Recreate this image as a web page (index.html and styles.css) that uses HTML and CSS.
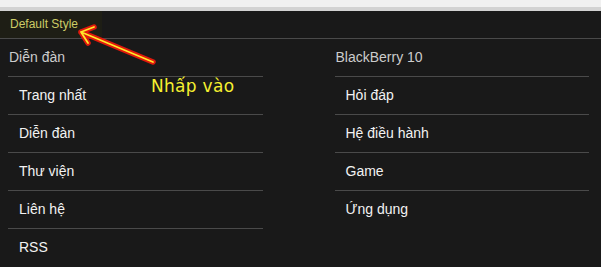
FILE: index.html
```html
<!DOCTYPE html>
<html lang="vi">
<head>
    <meta charset="UTF-8">
    <title>Default Style</title>
    <link rel="stylesheet" href="styles.css">
</head>
<body>
    <div class="topbar"></div>
    <div class="style-bar">
        <a class="style-chooser" href="#">Default Style</a>
    </div>

    <div class="menu">
        <div class="column">
            <div class="heading">Diễn đàn</div>
            <ul class="links">
                <li>Trang nhất</li>
                <li>Diễn đàn</li>
                <li>Thư viện</li>
                <li>Liên hệ</li>
                <li>RSS</li>
            </ul>
        </div>
        <div class="column">
            <div class="heading">BlackBerry 10</div>
            <ul class="links">
                <li>Hỏi đáp</li>
                <li>Hệ điều hành</li>
                <li>Game</li>
                <li>Ứng dụng</li>
            </ul>
        </div>
    </div>

    <!-- annotation drawn over the page -->
    <svg class="arrow" width="170" height="80" viewBox="0 0 170 80">
        <g fill="none" stroke-linecap="round" stroke-linejoin="round">
            <path d="M153 62 L81 32 M81 32 L94 27 M81 32 L88 43" stroke="#e0180c" stroke-width="5.5"/>
            <path d="M153 62 L81 32 M81 32 L94 27 M81 32 L88 43" stroke="#ffe82a" stroke-width="1.8"/>
        </g>
    </svg>
    <div class="note">Nhấp vào</div>
</body>
</html>
```

FILE: styles.css
```css
* {
    margin: 0;
    padding: 0;
    box-sizing: border-box;
}

body {
    background: #191919;
    font-family: "Liberation Sans", Arial, sans-serif;
    font-size: 14px;
    color: #eeeeee;
    height: 267px;
    overflow: hidden;
    position: relative;
}

.topbar {
    height: 11px;
    background: #f0f0f0;
    border-bottom: 4px solid #d2d2d2;
}

.style-bar {
    height: 28px;
    border-bottom: 1px solid #4a4a4a;
}

.style-chooser {
    display: inline-block;
    height: 27px;
    line-height: 26px;
    padding: 0 24px 0 10px;
    background: #1e1e15;
    color: #cccc66;
    font-size: 12px;
    text-decoration: none;
}

.menu {
    display: flex;
    gap: 72px;
    padding: 0 12px 0 8px;
}

.column {
    width: 255px;
}

.heading {
    height: 38px;
    line-height: 37px;
    padding-left: 1px;
    color: #cccccc;
    border-bottom: 1px solid #4a4a4a;
}

.links {
    list-style: none;
}

.links li {
    height: 38px;
    line-height: 37px;
    padding-left: 11px;
    color: #f2f2f2;
    border-bottom: 1px solid #4a4a4a;
}

.links li:last-child {
    border-bottom: none;
}

.arrow {
    position: absolute;
    left: 0;
    top: 0;
}

.note {
    position: absolute;
    left: 151px;
    top: 76px;
    color: #f5f030;
    font-family: "DejaVu Sans", sans-serif;
    font-size: 17px;
    letter-spacing: 0.3px;
}
```
